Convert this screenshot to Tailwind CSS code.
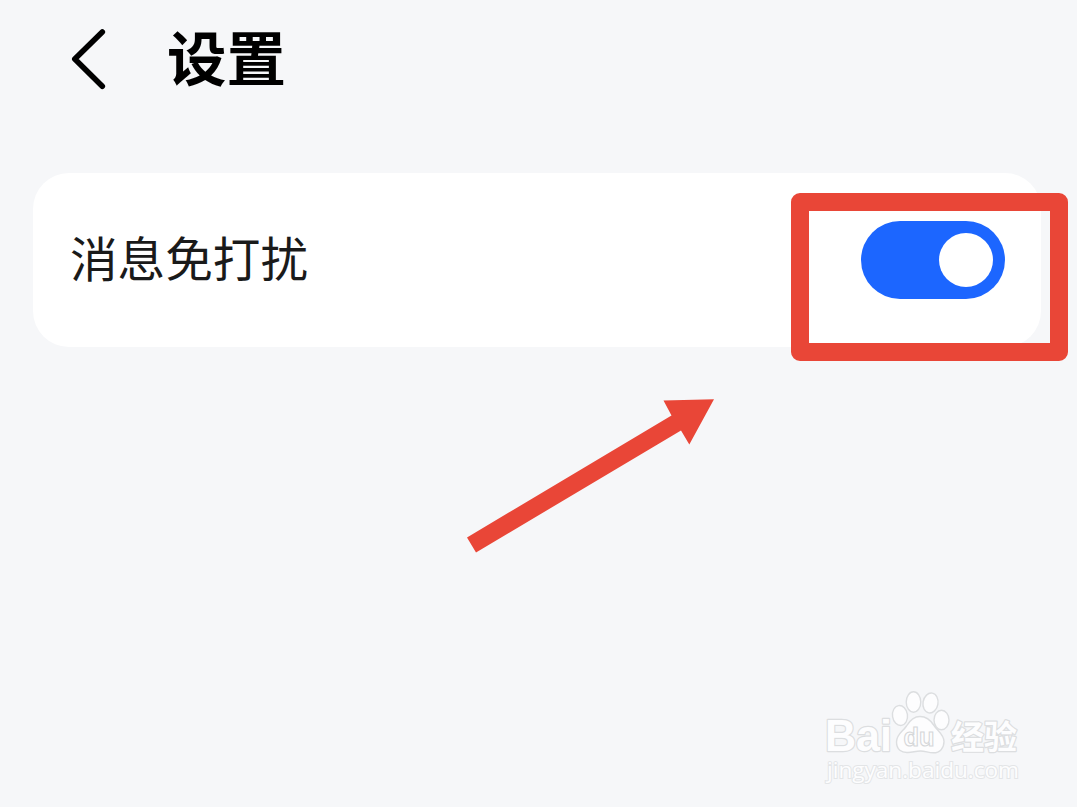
<!DOCTYPE html>
<html lang="zh-CN">
<head>
    <meta charset="UTF-8">
    <meta name="viewport" content="width=device-width, initial-scale=1.0">
    <title>设置</title>
    <script src="https://cdn.jsdelivr.net/npm/@tailwindcss/browser@4"></script>
</head>
<body class="relative h-screen overflow-hidden bg-[#f6f7f9] font-['Noto_Sans_CJK_SC',sans-serif]">

    <header class="flex h-[118px] items-center pl-[70px]">
        <button type="button" aria-label="返回" class="block">
            <svg class="block h-[64px] w-[38px]" viewBox="0 0 38 64" fill="none" stroke="#000" stroke-width="5.6" stroke-linecap="round" stroke-linejoin="round">
                <path d="M32.3 5 4.8 32 32.3 59.2" />
            </svg>
        </button>
        <h1 class="ml-[59px] pb-[7px] text-[59.5px] leading-none font-bold text-black">设置</h1>
    </header>

    <main class="pt-[55px] pr-[36px] pl-[33px]">
        <div class="flex h-[174px] items-center justify-between rounded-[36px] bg-white pr-[36px] pl-[37px]">
            <span class="pb-[6px] text-[47.6px] leading-none text-[#1a1a1a]">消息免打扰</span>
            <button type="button" role="switch" aria-checked="true" aria-label="消息免打扰" class="flex h-[78px] w-[144px] items-center justify-end rounded-full bg-[#1c66ff] pr-[12px]">
                <span class="block size-[54px] rounded-full bg-white"></span>
            </button>
        </div>
    </main>

    <!-- highlight box and arrow -->
    <div class="absolute top-[193px] left-[791px] h-[168px] w-[277px] rounded-[9px] border-[18px] border-[#e94637]"></div>
    <svg class="absolute top-[385px] left-[450px] h-[180px] w-[280px]" viewBox="0 0 280 180" fill="#e94637">
        <path d="M17 152.500 221.500 30.500 213.500 15.500 264 14.300 239.300 59.500 231 45.500 26 167.500Z" />
    </svg>

    <!-- watermark -->
    <svg class="absolute top-[680px] left-[815px] h-[110px] w-[220px]" viewBox="0 0 220 110" fill="#fdfdfe" stroke="#dcdee0" stroke-width="1.4">
        <g font-family="Liberation Sans, sans-serif" font-weight="700" stroke-width="2.4" paint-order="stroke" stroke-linejoin="round">
            <text x="10" y="71" font-size="45" textLength="67" lengthAdjust="spacingAndGlyphs">Bai</text>
            <text x="136" y="69" font-size="33" textLength="66" lengthAdjust="spacingAndGlyphs" font-family="Noto Sans CJK SC, sans-serif">经验</text>
        </g>
        <ellipse cx="85" cy="35.500" rx="7.500" ry="10" transform="rotate(-8 85 35.500)" />
        <ellipse cx="98.500" cy="22" rx="7.300" ry="10.200" />
        <ellipse cx="115.500" cy="23" rx="7.500" ry="10" transform="rotate(10 115.500 23)" />
        <ellipse cx="126.500" cy="40" rx="7.500" ry="9.700" />
        <path d="M105 36.500C98 36.500 94.500 41 91.500 46 88 51.500 81.500 54 81.500 62 81.500 69.500 86.500 73 93 72.500 98 72.200 101 71 105.500 71 110 71 113 72.500 118 72.800 125 73 129 68 129 61.500 129 54.500 123 51.500 119 45.500 115.500 40 112 36.500 105 36.500Z" />
        <text x="88.500" y="66" font-family="Liberation Sans, sans-serif" font-size="26" font-weight="700" textLength="31" lengthAdjust="spacingAndGlyphs" stroke="#d5d7d9" stroke-width="1.1">du</text>
        <text x="12" y="97.500" font-family="Open Sans, sans-serif" font-size="22.500" textLength="192" lengthAdjust="spacingAndGlyphs" stroke="#e3e5e7" stroke-width="2" paint-order="stroke">jingyan.baidu.com</text>
    </svg>
</body>
</html>
